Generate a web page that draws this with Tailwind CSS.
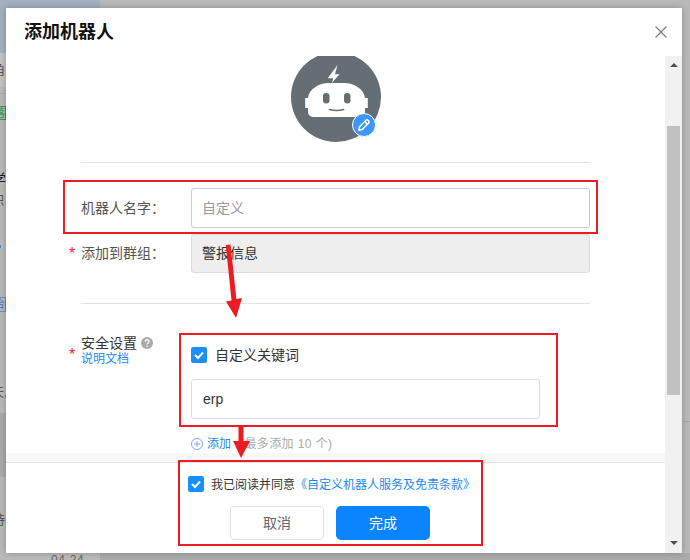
<!DOCTYPE html>
<html lang="zh">
<head>
<meta charset="utf-8">
<script src="https://cdn.jsdelivr.net/npm/@tailwindcss/browser@4"></script>
</head>
<body class="relative w-[690px] h-[560px] pt-[8px] overflow-hidden bg-[#b9b9b9] font-['Liberation_Sans','Noto_Sans_CJK_SC',sans-serif] text-[14px] text-[#333]">
  <!-- dimmed page behind the dialog -->
  <div class="absolute inset-0 overflow-hidden text-[13px] text-[#555]">
    <div class="absolute left-0 top-0 w-[100px] h-[53px] bg-[#a3b0bf]"></div>
    <div class="absolute left-[100px] top-0 right-0 h-[8px] bg-[#b9b9b9]"></div>
    <div class="absolute left-0 top-[53px] w-[6px] h-[34px] bg-[#c2c2c2]"></div>
    <div class="absolute left-[-8px] top-[61px] leading-[18px] text-[#555]">角</div>
    <div class="absolute left-0 top-[93px] w-[6px] h-[1px] bg-[#aaa]"></div>
    <div class="absolute left-[-7px] top-[106px] w-[13px] h-[14px] border border-[#2e9a4a] text-[11px] leading-[12px] text-[#2e9a4a]">落</div>
    <div class="absolute left-[-8px] top-[170px] text-[14px] leading-[18px] text-[#222]">学</div>
    <div class="absolute left-[-8px] top-[192px] text-[12px] leading-[18px] text-[#555]">职</div>
    <div class="absolute left-0 top-[245px] w-[1px] h-[3px] bg-[#3f88d8]"></div>
    <div class="absolute left-[-7px] top-[297px] w-[13px] h-[15px] border border-[#5d8fc9] text-[11px] leading-[13px] text-[#3f78bf]">合</div>
    <div class="absolute left-[-8px] top-[384px] text-[12px] leading-[18px] text-[#555]">天,</div>
    <div class="absolute left-0 top-[413px] w-[6px] h-[64px] bg-[#a9a9a9]"></div>
    <div class="absolute left-[-8px] top-[511px] text-[13px] leading-[18px] text-[#555]">持</div>
    <div class="absolute left-[51px] top-[553px] text-[12px] leading-[15px] tracking-[0.5px] text-[#666]">04-24</div>
    <div class="absolute left-[100px] top-[553px] right-0 bottom-0 bg-[#ababab]"></div>
    <div class="absolute left-[682px] top-[421px] right-0 h-[1px] bg-[#a8a8a8]"></div>
  </div>

  <!-- dialog -->
  <div class="relative ml-[6px] w-[676px] h-[545px] bg-white flex flex-col shadow-[0_0_6px_rgba(0,0,0,0.25)]">
    <div class="h-[48px] shrink-0 flex items-center justify-between pl-[18px] pr-[14px]">
      <h1 class="text-[18px] font-bold leading-[24px] text-[#111]">添加机器人</h1>
      <svg class="w-[14px] h-[14px]" viewBox="0 0 14 14" fill="none" stroke="#777" stroke-width="1.100"><path d="M1.500 1.500 12.500 12.500M12.500 1.500 1.500 12.500"/></svg>
    </div>
    <div class="flex-1 flex min-h-0">
      <div class="w-[659px] flex flex-col">
        <div class="h-[397px] overflow-hidden">
          <!-- avatar -->
          <div class="relative w-[90px] h-[90px] ml-[285px] mt-[-4px]">
            <svg class="w-[90px] h-[90px]" viewBox="0 0 90 90">
              <circle cx="45" cy="45" r="45" fill="#666e75"/>
              <path fill="#fff" d="M22 65a5 5 0 0 1-5-5v-4h-2.800V46H17C18 37 28 31 38 31H53C63 31 73 37 74 46h2.800v10H74v4a5 5 0 0 1-5 5Z"/>
              <path fill="#fff" d="M46.500 13 36.700 26.300h5.600L40.800 31 48.500 22.300H44Z"/>
              <rect x="32" y="41" width="6.500" height="10.500" rx="3.200" fill="#666e75"/>
              <rect x="53" y="41" width="6.500" height="10.500" rx="3.200" fill="#666e75"/>
              <path d="M38.500 57.500Q45.500 59.500 52.500 57.500" fill="none" stroke="#666e75" stroke-width="1.700" stroke-linecap="round"/>
            </svg>
            <div class="absolute left-[61px] top-[61px] w-[24px] h-[24px] rounded-full bg-[#3d97f7] border border-white flex items-center justify-center">
              <svg class="w-[16px] h-[16px]" viewBox="0 0 16 16" fill="none" stroke="#fff" stroke-width="1.500" stroke-linejoin="round"><path d="M2.800 13.200 3.500 9.800 10 3.300a1.500 1.500 0 0 1 2.100 0l.6.6a1.500 1.500 0 0 1 0 2.100L6.200 12.500ZM8.800 4.500l2.700 2.700"/></svg>
            </div>
          </div>
          <div class="h-[1px] w-[509px] ml-[75px] mt-[20px] bg-[#e4e4e4]"></div>

          <!-- fields -->
          <div class="flex items-center ml-[75px] mt-[25px]">
            <label class="w-[110px] text-[#555] leading-[20px]">机器人名字：</label>
            <div class="w-[399px] h-[40px] rounded-[3px] border border-[#ccc] pl-[10px] flex items-center text-[#999]">自定义</div>
          </div>
          <div class="flex items-center ml-[63px] mt-[6px]">
            <span class="w-[12px] text-[16px] text-[#f5222d] leading-[20px]">*</span>
            <label class="w-[110px] text-[#555] leading-[20px] pb-[2px]">添加到群组：</label>
            <div class="w-[399px] h-[39px] rounded-[3px] border border-[#ddd] bg-[#eee] pl-[10px] flex items-center text-[#333]">警报信息</div>
          </div>
          <div class="h-[1px] w-[509px] ml-[75px] mt-[30px] bg-[#e4e4e4]"></div>

          <div class="flex items-start ml-[63px] mt-[29px]">
            <span class="w-[12px] mt-[12px] text-[16px] text-[#f5222d] leading-[20px]">*</span>
            <div class="w-[110px] pt-[1px]">
              <div class="flex items-center gap-[4px] leading-[18px] text-[#333]">安全设置
                <svg class="w-[12px] h-[12px]" viewBox="0 0 12 12"><circle cx="6" cy="6" r="6" fill="#aaa"/><path d="M4.200 4.700a1.900 1.900 0 1 1 2.700 1.600c-.6.300-.9.600-.9 1.200" fill="none" stroke="#fff" stroke-width="1.300"/><circle cx="6" cy="9.300" r=".8" fill="#fff"/></svg>
              </div>
              <a class="block text-[12px] leading-[13px] mt-[1px] text-[#1e88f0]">说明文档</a>
            </div>
            <div class="w-[349px]">
              <div class="flex items-center gap-[8px] mt-[14px] h-[16px]">
                <span class="w-[16px] h-[16px] rounded-[2px] bg-[#1890ff] flex items-center justify-center">
                  <svg class="w-[12px] h-[12px]" viewBox="0 0 12 12" fill="none" stroke="#fff" stroke-width="2"><path d="M2 6 5 9 10 3.500"/></svg>
                </span>
                <span class="text-[#333]">自定义关键词</span>
              </div>
              <div class="h-[40px] mt-[16px] rounded-[3px] border border-[#ddd] pl-[11px] flex items-center text-[#333]">erp</div>
              <div class="flex items-center mt-[18px] h-[14px] text-[12px]">
                <svg class="w-[12px] h-[12px] mr-[4px]" viewBox="0 0 12 12" fill="none" stroke="#7aa8ee" stroke-width="1"><circle cx="6" cy="6" r="5.500"/><path d="M3 6h6M6 3v6"/></svg>
                <span class="text-[#1e88f0]">添加</span>
                <span class="ml-[9px] tracking-[0.4px] text-[#aaa]">(最多添加 10 个)</span>
              </div>
            </div>
          </div>
        </div>

        <!-- footer -->
        <div class="h-[9px] bg-[#f8f8f8]"></div>
        <div class="flex-1 border-t border-[#e2e2e2] pl-[182px]">
          <div class="flex items-center mt-[13px] h-[16px] text-[12px]">
            <span class="w-[16px] h-[16px] rounded-[2px] bg-[#1890ff] flex items-center justify-center mr-[7px]">
              <svg class="w-[12px] h-[12px]" viewBox="0 0 12 12" fill="none" stroke="#fff" stroke-width="2"><path d="M2 6 5 9 10 3.500"/></svg>
            </span>
            <span class="text-[#333] pt-[1px]">我已阅读并同意</span>
            <a class="text-[#1e88f0] pt-[1px]">《自定义机器人服务及免责条款》</a>
          </div>
          <div class="flex gap-[12px] mt-[14px] ml-[42px]">
            <button class="w-[94px] h-[34px] rounded-[4px] border border-[#e2e2e2] bg-white text-[#666]">取消</button>
            <button class="w-[94px] h-[34px] rounded-[5px] bg-[#0a84ff] text-white">完成</button>
          </div>
        </div>
      </div>

      <!-- scrollbar -->
      <div class="w-[17px] bg-[#f1f1f1] flex flex-col items-center">
        <svg class="w-[8px] h-[4px] mt-[7px] shrink-0" viewBox="0 0 8 4"><path d="M4 0 8 4H0Z" fill="#505050"/></svg>
        <div class="w-[13px] h-[269px] mt-[59px] bg-[#c1c1c1]"></div>
        <div class="flex-1"></div>
        <svg class="w-[8px] h-[4px] mb-[8px] shrink-0" viewBox="0 0 8 4"><path d="M4 4 8 0H0Z" fill="#505050"/></svg>
      </div>
    </div>
  </div>

  <!-- red annotations over the screenshot -->
  <div class="absolute left-[63px] top-[180px] w-[535px] h-[54px] border-2 border-[#ed1c24]"></div>
  <div class="absolute left-[179px] top-[333px] w-[379px] h-[94px] border-2 border-[#ed1c24]"></div>
  <div class="absolute left-[178px] top-[460px] w-[305px] h-[86px] border-2 border-[#ed1c24]"></div>
  <svg class="absolute left-0 top-0 w-[690px] h-[560px] pointer-events-none" viewBox="0 0 690 560">
    <path fill="#ed1c24" d="M225.800 245 230.500 244.500 236.400 299 242 298 236 318 226 301.500 231.500 300.500Z"/>
    <path fill="#ed1c24" d="M238.500 426h5v15h6.500L241 458 233 441h5.500Z"/>
  </svg>
</body>
</html>
